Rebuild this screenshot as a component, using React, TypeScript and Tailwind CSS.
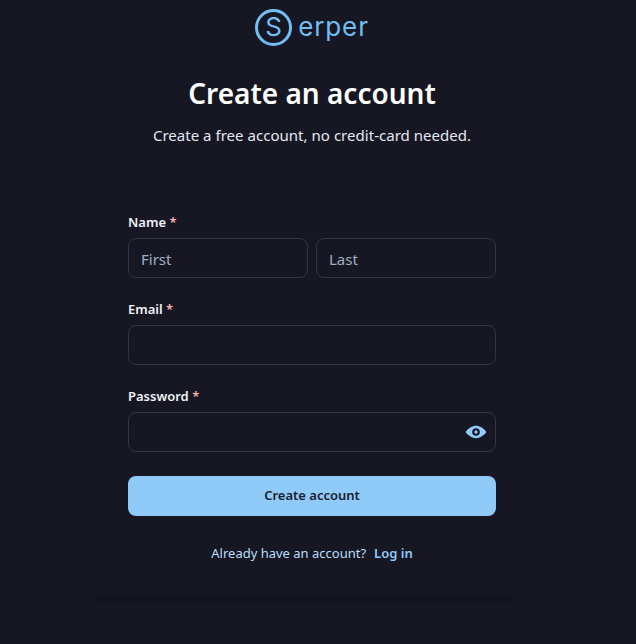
const font = { fontFamily: '"Noto Sans", "Open Sans", sans-serif' };

function Logo() {
  return (
    <div className="flex h-[46px] items-center justify-center">
      <div className="flex h-[37px] w-[37px] items-center justify-center rounded-full border-[3px] border-[#72bef2]">
        <span className="text-[26px] leading-none text-[#72bef2] [font-family:'Inter',sans-serif]">S</span>
      </div>
      <span className="ml-[6px] text-[26px] leading-none tracking-[0.9px] text-[#72bef2] [font-family:'Inter',sans-serif]">erper</span>
    </div>
  );
}

function Label({ children }: { children: string }) {
  return (
    <label className="mb-[6px] block h-[20px] text-[13px] leading-[20px] font-semibold text-[#edf2f7]">
      {children} <span className="text-[#feb2b2]">*</span>
    </label>
  );
}

function TextInput({ placeholder, type = "text" }: { placeholder?: string; type?: string }) {
  return (
    <input
      type={type}
      placeholder={placeholder}
      className="h-10 w-full min-w-0 rounded-lg border border-[#2d3748] bg-transparent px-3 pt-px text-[15px] text-white outline-none placeholder:text-[#a0aec0]"
    />
  );
}

export default function App() {
  return (
    <div className="h-[644px] w-[636px] overflow-hidden bg-[#171723]" style={font}>
      <div className="w-[624px]">
        <div className="pt-[4px]">
          <Logo />
        </div>
        <h1 className="mt-[25px] text-center text-[28px] leading-[36px] font-semibold text-white">Create an account</h1>
        <p className="mt-[12px] text-center text-[15px] leading-6 tracking-[0.03px] text-[#e2e8f0]">Create a free account, no credit-card needed.</p>

        <form className="mx-auto mt-[65px] w-[368px]">
          <Label>Name</Label>
          <div className="flex gap-2">
            <TextInput placeholder="First" />
            <TextInput placeholder="Last" />
          </div>

          <div className="mt-[21px]">
            <Label>Email</Label>
            <TextInput type="email" />
          </div>

          <div className="mt-[21px]">
            <Label>Password</Label>
            <div className="relative">
              <TextInput type="password" />
              <svg className="absolute top-[10px] right-[10px] h-5 w-5" viewBox="0 0 24 24" aria-hidden>
                <path
                  fill="#90caf9"
                  d="M23.432,10.524C20.787,7.614,16.4,4.538,12,4.6,7.6,4.537,3.213,7.615.568,10.524a2.211,2.211,0,0,0,0,2.948C3.182,16.351,7.507,19.4,11.839,19.4h.308c4.347,0,8.671-3.049,11.288-5.929A2.21,2.21,0,0,0,23.432,10.524ZM7.4,12A4.6,4.6,0,1,1,12,16.6,4.6,4.6,0,0,1,7.4,12Z"
                />
                <circle cx="12" cy="12" r="2" fill="#90caf9" />
              </svg>
            </div>
          </div>

          <button type="button" className="mt-6 h-10 w-full rounded-lg bg-[#90caf9] text-[13px] font-semibold text-[#1a202c]">
            Create account
          </button>

          <p className="mt-[25px] text-center text-[13px] leading-[24px] text-[#bbdefb]">
            Already have an account?
            <a className="ml-2 font-semibold text-[#90caf9]">Log in</a>
          </p>
        </form>

        <div className="mx-auto mt-[31px] h-[5px] w-[416px] -translate-x-[7px] bg-[#13131d] blur-[1px]" />
      </div>
    </div>
  );
}
